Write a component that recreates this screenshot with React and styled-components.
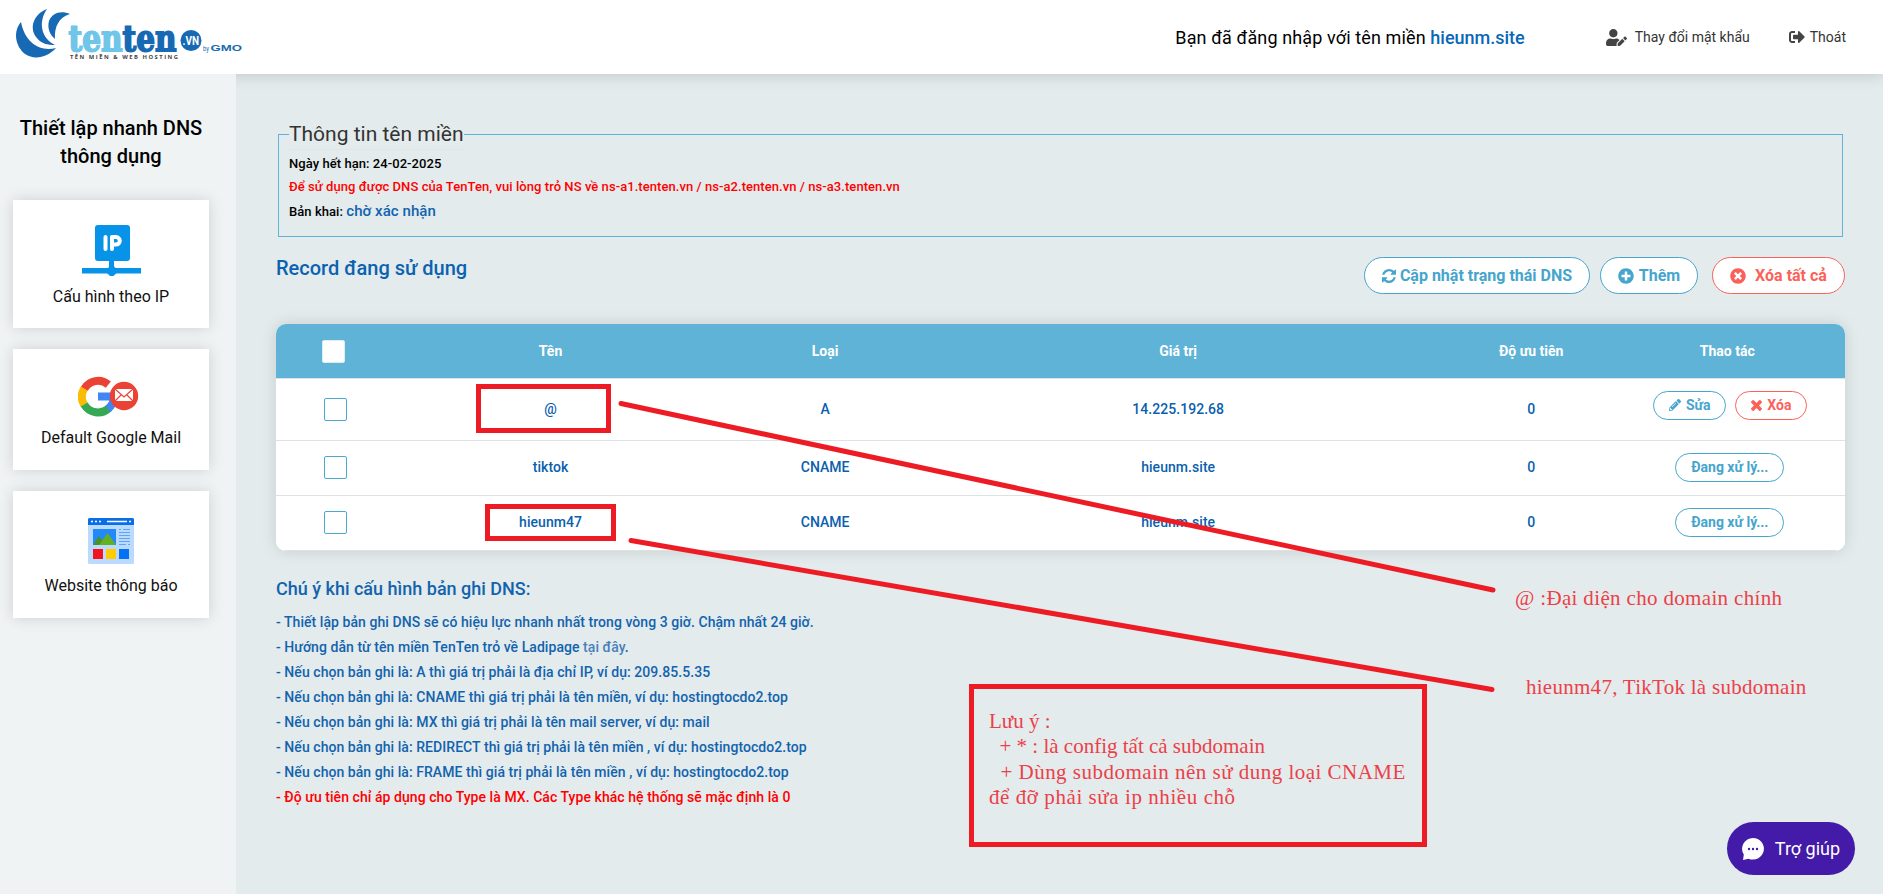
import React from "react";
import styled, { createGlobalStyle, css } from "styled-components";
import { FaUserEdit, FaPlusCircle, FaTimesCircle, FaPencilAlt, FaSignOutAlt } from "react-icons/fa";

const GlobalStyle = createGlobalStyle`
  *, *::before, *::after { box-sizing: border-box; }
  body {
    margin: 0;
    font-family: Roboto, "Liberation Sans", sans-serif;
    font-size: 14px;
    color: #000;
    background: #e3ebec;
    overflow: hidden;
  }
  p, h1, h2 { margin: 0; }
`;

const Page = styled.div`
  position: relative;
  height: 894px;
  display: flex;
  flex-direction: column;
`;

const Header = styled.header`
  position: relative;
  z-index: 1;
  flex: none;
  height: 74px;
  padding-right: 37px;
  display: flex;
  align-items: center;
  background: #fff;
  box-shadow: 0 2px 14px rgba(0, 0, 0, 0.14);
`;

const LogoArt = styled.svg`
  display: block;
  align-self: flex-start;
  margin-right: auto;
`;

const Greeting = styled.p`
  font-size: 18px;
  line-height: 24px;
  margin-top: 2px;
  margin-right: 81px;
  letter-spacing: 0.12px;
  white-space: nowrap;
`;

const Domain = styled.span`
  font-weight: 500;
  color: #0867b8;
  letter-spacing: 0;
`;

const HeaderLink = styled.a`
  display: flex;
  align-items: center;
  gap: ${(p) => p.$gap}px;
  margin-left: ${(p) => p.$left || 0}px;
  color: #333;
  font-size: 14px;
  line-height: 20px;
  white-space: nowrap;
  svg { color: #444; }
`;

const Body = styled.div`
  flex: 1;
  display: flex;
  min-height: 0;
`;

const Sidebar = styled.aside`
  position: relative;
  z-index: 2;
  width: 236px;
  flex: none;
  padding: 40px 27px 0 13px;
  display: flex;
  flex-direction: column;
  background: #eff3f4;
`;

const SideTitle = styled.h1`
  font-size: 20px;
  font-weight: 500;
  line-height: 28px;
  text-align: center;
  margin-bottom: 30px;
`;

const SideCard = styled.a`
  display: flex;
  flex-direction: column;
  align-items: center;
  height: ${(p) => p.$height}px;
  margin-bottom: 21px;
  padding-top: ${(p) => p.$top}px;
  background: #fff;
  box-shadow: 0 0 14px rgba(0, 0, 0, 0.14);
  font-size: 16px;
  line-height: 20px;
  color: #111;
  svg { display: block; margin-bottom: ${(p) => p.$gap}px; }
`;

const Main = styled.main`
  flex: 1;
  min-width: 0;
  padding: 45px 38px 0 40px;
  display: flex;
  flex-direction: column;
`;

const InfoBox = styled.fieldset`
  margin: 0 2px;
  padding: 0 10px;
  height: 118px;
  border: 1px solid #5eb3d7;
`;

const InfoLegend = styled.legend`
  padding: 0;
  height: 31px;
  border-bottom: 1px solid #e1e5e6;
  font-size: 21px;
  line-height: 31px;
  color: #333;
`;

const InfoLine = styled.p`
  font-size: 13px;
  font-weight: 500;
  line-height: 23px;
  letter-spacing: 0.06px;
  margin-top: ${(p) => p.$top || 0}px;
  color: ${(p) => (p.$warn ? "#f00" : "#000")};
`;

const Status = styled.span`
  font-size: 15px;
  color: #1263ae;
`;

const Toolbar = styled.div`
  display: flex;
  align-items: flex-start;
  height: 67px;
  margin-top: 20px;
`;

const SectionTitle = styled.h2`
  font-size: 20px;
  font-weight: 500;
  line-height: 22px;
  margin-right: auto;
  color: #0b62b0;
`;

const Pill = styled.button`
  display: flex;
  align-items: center;
  justify-content: center;
  gap: ${(p) => p.$gap || 5}px;
  width: ${(p) => p.$width}px;
  height: ${(p) => (p.$small ? 29 : 37)}px;
  margin-left: ${(p) => p.$left || 0}px;
  padding: 0;
  border: 1px solid ${(p) => (p.$danger ? "#fb6159" : "#46a5cc")};
  border-radius: 19px;
  background: #fff;
  color: ${(p) => (p.$danger ? "#fb6159" : "#46a5cc")};
  font: ${(p) => (p.$small ? css`700 14px` : css`700 16px`)} Roboto, sans-serif;
  white-space: nowrap;
`;

const Table = styled.div`
  border-radius: 10px;
  background: #fff;
  box-shadow: 0 0 16px rgba(0, 0, 0, 0.13);
  overflow: hidden;
`;

const Row = styled.div`
  display: grid;
  grid-template-columns: 5fr 25fr 10fr 35fr 10fr 15fr;
  align-items: center;
  height: ${(p) => p.$height}px;
  padding-bottom: ${(p) => (p.$head ? 0 : 2)}px;
  border-bottom: 1px solid #dfe2e3;
  text-align: center;
  font-weight: ${(p) => (p.$head ? 700 : 500)};
  letter-spacing: ${(p) => (p.$head ? 0 : 0.05)}px;
  color: ${(p) => (p.$head ? "#fff" : "#0b5fae")};
  background: ${(p) => (p.$head ? "#5eb3d7" : "#fff")};
`;

const Cell = styled.div`
  min-width: 0;
  line-height: 20px;
`;

const Check = styled.span`
  display: block;
  width: 23px;
  height: 23px;
  margin-left: ${(p) => (p.$head ? 46 : 48)}px;
  margin-top: ${(p) => (p.$head ? 0 : 1)}px;
  border: 1px solid ${(p) => (p.$head ? "#d9eef7" : "#4ba9d0")};
  border-radius: 2px;
  background: #fff;
`;

const Actions = styled.div`
  display: flex;
  gap: 9px;
  justify-content: center;
  padding-left: ${(p) => p.$shift}px;
  margin-top: ${(p) => (p.$raised ? -7 : 0)}px;
`;

const Notes = styled.section`
  margin-top: 24px;
  color: #1263ae;
`;

const NotesTitle = styled.h2`
  font-size: 18px;
  font-weight: 500;
  line-height: 28px;
  margin-bottom: 7px;
`;

const NoteLine = styled.p`
  font-weight: 500;
  line-height: 25px;
  letter-spacing: 0.055px;
  color: ${(p) => (p.$warn ? "#f00" : "inherit")};
`;

const NoteLink = styled.a`
  color: #4a80b8;
`;

const Markup = styled.svg`
  position: absolute;
  inset: 0;
  z-index: 3;
  pointer-events: none;
`;

const Remark = styled.div`
  position: absolute;
  z-index: 3;
  left: ${(p) => p.$x}px;
  top: ${(p) => p.$y}px;
  font-family: "Liberation Serif", serif;
  font-size: 21px;
  line-height: 25.4px;
  color: #ec4048;
  white-space: pre;
`;

const RemarkLine = styled.p`
  letter-spacing: ${(p) => p.$spacing || 0}px;
`;

const Help = styled.button`
  position: absolute;
  z-index: 4;
  right: 28px;
  bottom: 19px;
  width: 128px;
  height: 53px;
  padding: 0;
  display: flex;
  align-items: center;
  justify-content: center;
  gap: 11px;
  border: 0;
  border-radius: 27px;
  background: #431ba8;
  color: #fff;
  font: 400 18px Roboto, sans-serif;
`;

function Logo() {
  return (
    <LogoArt width="250" height="66" viewBox="0 0 250 66">
      <g fill="#1769b4">
        <path d="M21 22C13 31 15 46 25 54c9 6 22 4 31-6C40 52 25 43 21 22z" />
        <path d="M47 9C34 14 29 27 36 37c5 7 12 8 19 8C41 38 38 22 47 9z" />
        <path d="M70 14c-9-4-18-1-21 7-2 7 1 14 6 18-1-12 4-22 15-25z" />
      </g>
      <text x="68.500" y="50.500" textLength="108" lengthAdjust="spacingAndGlyphs" fontFamily="DejaVu Serif" fontWeight="700" fontSize="35" strokeWidth="1.8">
        <tspan fill="#70c6e8" stroke="#70c6e8">ten</tspan><tspan fill="#1769b4" stroke="#1769b4">ten</tspan>
      </text>
      <circle cx="191" cy="40.500" r="10.500" fill="#1769b4" />
      <text x="182.500" y="45" fontFamily="Roboto" fontWeight="700" fontSize="13" fill="#fff" textLength="16.500" lengthAdjust="spacingAndGlyphs">.VN</text>
      <text x="203" y="51" fontFamily="Roboto" fontSize="6.500" fill="#1769b4" textLength="6" lengthAdjust="spacingAndGlyphs">by</text>
      <text x="210.500" y="51" fontFamily="Liberation Sans" fontWeight="700" fontSize="9" fill="#1769b4" textLength="31.500" lengthAdjust="spacingAndGlyphs">GMO</text>
      <text x="70" y="59" fontFamily="Open Sans" fontWeight="700" fontSize="5.8" fill="#444" textLength="108">TÊN MIỀN &amp; WEB HOSTING</text>
    </LogoArt>
  );
}

function IpIcon() {
  return (
    <svg width="59" height="51" viewBox="0 0 59 51">
      <g fill="#0693e8">
        <rect x="13" width="35" height="36" rx="3" />
        <rect x="27" y="35" width="5" height="9" />
        <rect y="43" width="59" height="5.500" />
        <path d="M28 41h3.500l3 3v4l-3 3H28l-3-3v-4z" />
      </g>
      <path d="M23.500 12v12M30 24V12h4a3.800 3.800 0 0 1 0 7.600H30" fill="none" stroke="#fff" strokeWidth="4" strokeLinecap="round" strokeLinejoin="round" />
    </svg>
  );
}

function GoogleMailIcon() {
  return (
    <svg width="66" height="42" viewBox="0 0 66 42">
      <g fill="none" strokeWidth="8">
        <path d="M30.300 8.600A16 16 0 0 0 6.200 12.900" stroke="#ea4335" />
        <path d="M6.200 12.500A16 16 0 0 0 6.200 29" stroke="#fbbc05" />
        <path d="M6.200 28.500A16 16 0 0 0 31 32" stroke="#34a853" />
        <path d="M30 32.800A16 16 0 0 0 36 20.500H20" stroke="#4285f4" />
      </g>
      <circle cx="46" cy="20" r="14.200" fill="#ea4335" />
      <path fill="#fff" d="M37 13h18v12H37z" />
      <path d="M37 13l9 8 9-8M37 25l6.500-6.500M55 25l-6.500-6.500" fill="none" stroke="#ea4335" strokeWidth="1.200" />
    </svg>
  );
}

function WebsiteIcon() {
  return (
    <svg width="46" height="46" viewBox="0 0 46 46">
      <rect width="46" height="46" rx="1.500" fill="#bbdaff" />
      <path d="M1.500 0h43A1.500 1.500 0 0 1 46 1.500V7H0V1.500A1.500 1.500 0 0 1 1.500 0z" fill="#0a6fe6" />
      <path d="M3 3.500h2M7 3.500h2M11 3.500h2M19 3.500h20M41 3.500h2" stroke="#fff" strokeWidth="1.600" />
      <path fill="#2389fb" d="M5 11h23v16H5z" />
      <path fill="#4a9320" d="M5 27l6-9 6 9z" />
      <path fill="#63b021" d="M11 27l8.500-12L28 27z" />
      <path d="M31 11.500h2M35 11.500h7M31 14.500h11M31 17.500h11M31 20.500h11M31 23.500h11M31 26.500h7M40 26.500h2" stroke="#5ea5f8" />
      <path fill="#f3131f" d="M5 31h10v10H5z" />
      <path fill="#ffcb03" d="M18 31h10v10H18z" />
      <path fill="#0671f2" d="M31 31h10v10H31z" />
    </svg>
  );
}

function RefreshIcon() {
  return (
    <svg width="14" height="14" viewBox="0 0 1536 1536" fill="currentColor">
      <path d="M1511 928q0 5-1 7-64 268-268 434.500T764 1536q-146 0-282.500-55T238 1324l-129 129q-19 19-45 19t-45-19-19-45V960q0-26 19-45t45-19h448q26 0 45 19t19 45-19 45l-137 137q71 66 161 102t187 36q134 0 250-65t186-179q11-17 53-117 8-23 30-23h192q13 0 22.500 9.500t9.500 22.500zm25-800v448q0 26-19 45t-45 19h-448q-26 0-45-19t-19-45 19-45l138-138Q969 256 768 256q-134 0-250 65T332 500q-11 17-53 117-8 23-30 23H50q-13 0-22.500-9.500T18 608v-7q65-268 270-434.500T768 0q146 0 284 55.500T1297 212l130-129q19-19 45-19t45 19 19 45z" />
    </svg>
  );
}

function CrossIcon() {
  return (
    <svg width="11" height="11" viewBox="110 366 1188 1188" fill="currentColor">
      <path d="M1298 1322q0 40-28 68l-136 136q-28 28-68 28t-68-28l-294-294-294 294q-28 28-68 28t-68-28l-136-136q-28-28-28-68t28-68l294-294-294-294q-28-28-28-68t28-68l136-136q28-28 68-28t68 28l294 294 294-294q28-28 68-28t68 28l136 136q28 28 28 68t-28 68l-294 294 294 294q28 28 28 68z" />
    </svg>
  );
}

function ChatIcon() {
  return (
    <svg width="22" height="22" viewBox="0 0 22 22">
      <path d="M11 0a11 10.800 0 1 1-4.500 20.700L1 22l.8-5.500A11 10.800 0 0 1 11 0z" fill="#fff" />
      <g fill="#431ba8"><circle cx="7" cy="11" r="1.200" /><circle cx="11" cy="11" r="1.200" /><circle cx="15" cy="11" r="1.200" /></g>
    </svg>
  );
}

const records = [
  { name: "@", type: "A", value: "14.225.192.68", height: 62, ready: true },
  { name: "tiktok", type: "CNAME", value: "hieunm.site", height: 55 },
  { name: "hieunm47", type: "CNAME", value: "hieunm.site", height: 55 },
];

export default function App() {
  return (
    <Page>
      <GlobalStyle />
      <Header>
        <Logo />
        <Greeting>Bạn đã đăng nhập với tên miền <Domain>hieunm.site</Domain></Greeting>
        <HeaderLink $gap={8}><FaUserEdit size={21} />Thay đổi mật khẩu</HeaderLink>
        <HeaderLink $gap={5} $left={39}><FaSignOutAlt size={16} />Thoát</HeaderLink>
      </Header>
      <Body>
        <Sidebar>
          <SideTitle>Thiết lập nhanh DNS thông dụng</SideTitle>
          <SideCard $height={128} $top={25} $gap={11}><IpIcon />Cấu hình theo IP</SideCard>
          <SideCard $height={121} $top={27} $gap={10}><GoogleMailIcon />Default Google Mail</SideCard>
          <SideCard $height={127} $top={27} $gap={12}><WebsiteIcon />Website thông báo</SideCard>
        </Sidebar>
        <Main>
          <InfoBox>
            <InfoLegend>Thông tin tên miền</InfoLegend>
            <InfoLine $top={2}>Ngày hết hạn: 24-02-2025</InfoLine>
            <InfoLine $warn>Để sử dụng được DNS của TenTen, vui lòng trỏ NS về ns-a1.tenten.vn / ns-a2.tenten.vn / ns-a3.tenten.vn</InfoLine>
            <InfoLine $top={2}>Bản khai: <Status>chờ xác nhận</Status></InfoLine>
          </InfoBox>
          <Toolbar>
            <SectionTitle>Record đang sử dụng</SectionTitle>
            <Pill $width={226} $gap={4}><RefreshIcon />Cập nhật trạng thái DNS</Pill>
            <Pill $width={98} $left={10}><FaPlusCircle size={16} />Thêm</Pill>
            <Pill $width={133} $left={14} $gap={9} $danger><FaTimesCircle size={16} />Xóa tất cả</Pill>
          </Toolbar>
          <Table>
            <Row $head $height={55}>
              <Cell><Check $head /></Cell>
              <Cell>Tên</Cell><Cell>Loại</Cell><Cell>Giá trị</Cell><Cell>Độ ưu tiên</Cell><Cell>Thao tác</Cell>
            </Row>
            {records.map((r) => (
              <Row key={r.name} $height={r.height}>
                <Cell><Check /></Cell>
                <Cell>{r.name}</Cell><Cell>{r.type}</Cell><Cell>{r.value}</Cell><Cell>0</Cell>
                <Cell>
                  {r.ready ? (
                    <Actions $shift={6} $raised>
                      <Pill $small $width={73}><FaPencilAlt size={12} />Sửa</Pill>
                      <Pill $small $width={72} $danger><CrossIcon />Xóa</Pill>
                    </Actions>
                  ) : (
                    <Actions $shift={5}><Pill $small $width={109}>Đang xử lý...</Pill></Actions>
                  )}
                </Cell>
              </Row>
            ))}
          </Table>
          <Notes>
            <NotesTitle>Chú ý khi cấu hình bản ghi DNS:</NotesTitle>
            <NoteLine>- Thiết lập bản ghi DNS sẽ có hiệu lực nhanh nhất trong vòng 3 giờ. Chậm nhất 24 giờ.</NoteLine>
            <NoteLine>- Hướng dẫn từ tên miền TenTen trỏ về Ladipage <NoteLink>tại đây</NoteLink>.</NoteLine>
            <NoteLine>- Nếu chọn bản ghi là: A thì giá trị phải là địa chỉ IP, ví dụ: 209.85.5.35</NoteLine>
            <NoteLine>- Nếu chọn bản ghi là: CNAME thì giá trị phải là tên miền, ví dụ: hostingtocdo2.top</NoteLine>
            <NoteLine>- Nếu chọn bản ghi là: MX thì giá trị phải là tên mail server, ví dụ: mail</NoteLine>
            <NoteLine>- Nếu chọn bản ghi là: REDIRECT thì giá trị phải là tên miền , ví dụ: hostingtocdo2.top</NoteLine>
            <NoteLine>- Nếu chọn bản ghi là: FRAME thì giá trị phải là tên miền , ví dụ: hostingtocdo2.top</NoteLine>
            <NoteLine $warn>- Độ ưu tiên chỉ áp dụng cho Type là MX. Các Type khác hệ thống sẽ mặc định là 0</NoteLine>
          </Notes>
        </Main>
      </Body>
      <Markup width="1883" height="894" fill="none" stroke="#ed1c24" strokeWidth="5">
        <rect x="478.500" y="386.500" width="130" height="44" />
        <rect x="487.500" y="506.500" width="126" height="32" />
        <rect x="971.500" y="686.500" width="453" height="158" />
        <path d="M621 403.500L1493 590M631 540.500L1492 689.500" strokeLinecap="round" />
      </Markup>
      <Remark $x={1515} $y={586}><RemarkLine $spacing={0.34}>@ :Đại diện cho domain chính</RemarkLine></Remark>
      <Remark $x={1526} $y={675}><RemarkLine $spacing={0.27}>hieunm47, TikTok là subdomain</RemarkLine></Remark>
      <Remark $x={989} $y={709}>
        <RemarkLine>Lưu ý :</RemarkLine>
        <RemarkLine>{"  + * : là config tất cả subdomain"}</RemarkLine>
        <RemarkLine $spacing={0.48}>{"  + Dùng subdomain nên sử dung loại CNAME"}</RemarkLine>
        <RemarkLine $spacing={0.57}>để đỡ phải sửa ip nhiều chỗ</RemarkLine>
      </Remark>
      <Help><ChatIcon />Trợ giúp</Help>
    </Page>
  );
}
